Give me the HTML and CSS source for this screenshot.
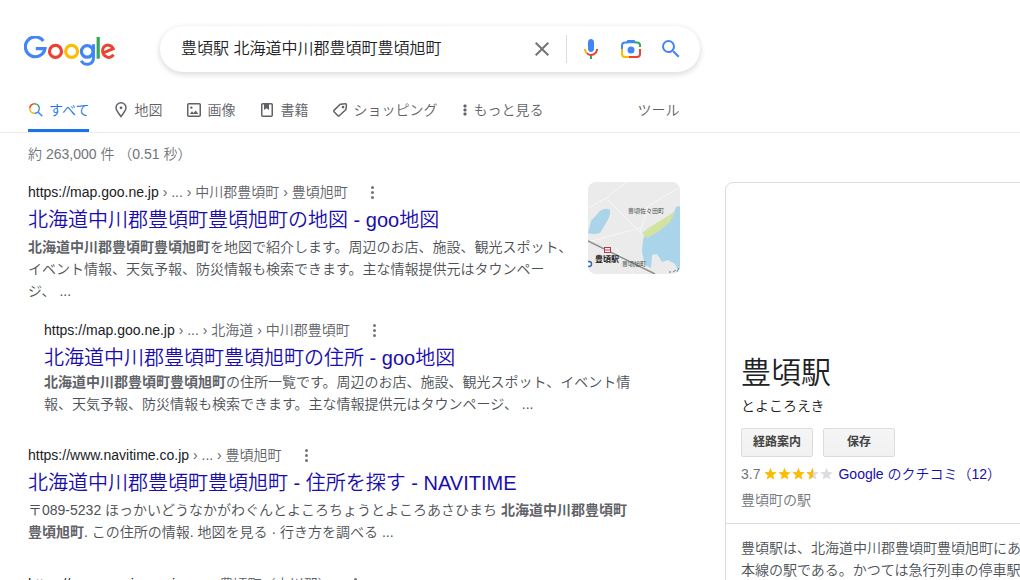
FILE: index.html
```html
<!DOCTYPE html>
<html lang="ja">
<head>
<meta charset="utf-8">
<title>豊頃駅 北海道中川郡豊頃町豊頃旭町 - Google 検索</title>
<link rel="stylesheet" href="styles.css">
</head>
<body>
<header class="header">
  <a class="logo" href="#" aria-label="Google">
    <svg width="92" height="32" viewBox="0 0 92 32" fill="none" stroke-width="3.200">
      <path d="M19.300 5A9.900 9.900 0 1 0 21 12.700H11.800" stroke="#4285f4"/>
      <circle cx="31.500" cy="15.400" r="6" stroke="#ea4335"/>
      <circle cx="47.600" cy="15.400" r="6" stroke="#fbbc05"/>
      <circle cx="63.200" cy="15.400" r="5.800" stroke="#4285f4"/>
      <path d="M69.500 8.300V21.500C69.500 29.500 59.500 30.300 57.300 24.800" stroke="#4285f4" stroke-width="3"/>
      <path d="M74.200 1V22.700" stroke="#34a853"/>
      <path d="M78.700 17.100L89.200 12.700C87.300 8.200 82 8.200 79.700 11.200C75.500 17.500 83.800 25.800 89.600 18.700" stroke="#ea4335" stroke-width="3"/>
    </svg>
  </a>
  <form class="search" role="search">
    <input class="search-input" type="text" aria-label="検索" value="豊頃駅 北海道中川郡豊頃町豊頃旭町">
    <button class="icon-btn clear" type="button" aria-label="クリア">
      <svg width="24" height="24" viewBox="0 0 24 24"><path fill="#70757a" d="M19 6.410L17.590 5 12 10.590 6.410 5 5 6.410 10.590 12 5 17.590 6.410 19 12 13.410 17.590 19 19 17.590 13.410 12z"/></svg>
    </button>
    <button class="icon-btn" type="button" aria-label="音声検索">
      <svg width="24" height="24" viewBox="0 0 24 24"><path fill="#4285f4" d="M12 15c1.660 0 3-1.310 3-2.970V5.010C15 3.340 13.660 2 12 2S9 3.340 9 5.010v7.020C9 13.690 10.340 15 12 15z"/><path fill="#34a853" d="M11 18.080h2V22h-2z"/><path fill="#fbbc05" d="M7.050 16.870C5.780 15.590 5 13.920 5 12h2c0 1.450.560 2.420 1.470 3.380z"/><path fill="#ea4335" d="M12 16.930a4.970 5.250 0 0 1-3.540-1.550l-1.410 1.490C8.310 18.140 10.060 19 12 19c3.870 0 6.990-2.920 6.990-7h-1.990c0 2.920-2.240 4.930-5 4.930z"/></svg>
    </button>
    <button class="icon-btn" type="button" aria-label="画像で検索">
      <svg width="24" height="24" viewBox="0 0 24 24" fill="none" stroke-width="2"><path stroke="#4285f4" d="M3 12V8.500A3 3 0 0 1 6 5.500H7.800L9.600 4H14.400L16.200 5.500"/><path fill="#4285f4" d="M8.500 3H15.500L17 6.300H7z"/><path stroke="#34a853" d="M16.200 5.500H18A3 3 0 0 1 21 8.500V10"/><path stroke="#ea4335" d="M21 12V17A3 3 0 0 1 18 20H10"/><path stroke="#fbbc05" d="M10 20H6A3 3 0 0 1 3 17V12"/><circle cx="12" cy="13" r="3.500" fill="#4285f4"/></svg>
    </button>
    <button class="icon-btn" type="submit" aria-label="Google 検索">
      <svg width="24" height="24" viewBox="0 0 24 24"><path fill="#4285f4" d="M15.500 14h-.79l-.28-.27A6.471 6.471 0 0 0 16 9.500 6.500 6.500 0 1 0 9.500 16c1.610 0 3.090-.59 4.230-1.570l.27.28v.790l5 4.990L20.490 19l-4.990-5zm-6 0C7.010 14 5 11.990 5 9.500S7.010 5 9.500 5 14 7.010 14 9.500 11.990 14 9.500 14z"/></svg>
    </button>
  </form>
</header>

<nav class="tabs">
  <a class="tab active" href="#">
    <svg width="16" height="16" viewBox="0 0 16 16" fill="none" stroke-width="1.500"><path stroke="#ea4335" d="M1.750 6.500A4.750 4.750 0 0 1 6.500 1.750"/><path stroke="#34a853" d="M6.500 1.750A4.750 4.750 0 0 1 11.250 6.500"/><path stroke="#4285f4" d="M11.250 6.500A4.750 4.750 0 0 1 6.500 11.250M10 10L14.300 14.300"/><path stroke="#fbbc05" d="M6.500 11.250A4.750 4.750 0 0 1 1.750 6.500"/></svg>すべて</a>
  <a class="tab" href="#">
    <svg width="16" height="16" viewBox="0 0 16 16"><path fill="none" stroke="#5f6368" stroke-width="1.500" d="M8 14.500C5.400 11 3 8.500 3 5.800A5 5 0 0 1 13 5.800C13 8.500 10.600 11 8 14.500z"/><circle cx="8" cy="5.800" r="1.400" fill="#5f6368"/></svg>地図</a>
  <a class="tab" href="#">
    <svg width="16" height="16" viewBox="0 0 16 16"><rect x="1.750" y="1.750" width="12.500" height="12.500" rx="1" fill="none" stroke="#5f6368" stroke-width="1.500"/><path fill="#5f6368" d="M3.800 12L6 9.300l1.600 1.600 2.200-2.400L12.300 12z"/><circle cx="5.300" cy="5.600" r="1.200" fill="#5f6368"/></svg>画像</a>
  <a class="tab" href="#">
    <svg width="16" height="16" viewBox="0 0 16 16"><rect x="2.750" y="1.750" width="10.500" height="12.500" rx="1" fill="none" stroke="#5f6368" stroke-width="1.500"/><path fill="#5f6368" d="M5 2h5v6L7.500 6.300 5 8z"/></svg>書籍</a>
  <a class="tab" href="#">
    <svg width="16" height="16" viewBox="0 0 16 16"><path fill="none" stroke="#5f6368" stroke-width="1.500" stroke-linejoin="round" d="M8.200 2.200L13.500 1.800Q14.500 1.800 14.400 3L14 7.500L7.200 13.800Q6.500 14.300 5.900 13.700L2 9.700Q1.400 9 2 8.400z"/><circle cx="11" cy="5.100" r="1.300" fill="#5f6368"/></svg>ショッピング</a>
  <a class="tab more" href="#">
    <svg width="8" height="16" viewBox="0 0 8 16" fill="#5f6368"><rect x="2.500" y="2.500" width="3" height="3" rx="1"/><rect x="2.500" y="6.500" width="3" height="3" rx="1"/><rect x="2.500" y="10.500" width="3" height="3" rx="1"/></svg>もっと見る</a>
  <button class="tab tools" type="button">ツール</button>
</nav>

<div class="page">
  <main class="results">
    <p class="stats">約 263,000 件 （0.51 秒）</p>

    <article class="result with-thumb">
      <div class="result-body">
        <div class="source"><cite class="url">https://map.goo.ne.jp<span class="crumb"> › ... › 中川郡豊頃町 › 豊頃旭町</span></cite><button class="kebab" type="button" aria-label="この結果について"><i class="dot"></i><i class="dot"></i><i class="dot"></i></button></div>
        <h3 class="title"><a href="#">北海道中川郡豊頃町豊頃旭町の地図 - goo地図</a></h3>
        <p class="snippet"><b>北海道中川郡豊頃町豊頃旭町</b>を地図で紹介します。周辺のお店、施設、観光スポット、イベント情報、天気予報、防災情報も検索できます。主な情報提供元はタウンペー<wbr><span class="tail">ジ、 ...</span></p>
      </div>
      <a class="thumb" href="#" aria-label="豊頃旭町の地図">
        <svg width="92" height="92" viewBox="0 0 92 92">
          <rect width="92" height="92" fill="#ebebeb"/>
          <g fill="none" stroke="#f6f6f6"><path d="M0 26L20 15L38 0M20 18L54 52M0 60L52 46M52 50L60 24L92 5M28 66L46 92"/></g>
          <path d="M0 51L3 39L12 29Q18 25 22 28Q23 33 18 41L12 51Q5 53 0 51z" fill="#a9d4ea"/>
          <path d="M55 58L58 49L86 30L88 25L92 24V92L87 82L80 78L74 80L69 72L64 73L63 86L57 83L54 70z" fill="#a9d4ea"/>
          <path d="M54 51L62 45L88 29L82 40L70 50L59 56z" fill="#d2e3a1"/>
          <path d="M0 59L67 92" fill="none" stroke="#8b8b8b" stroke-width="1.400"/>
          <rect x="16.500" y="65.500" width="6" height="5" fill="#fff" stroke="#bc364b"/><path d="M17 68H22" stroke="#bc364b"/>
          <circle cx="1" cy="82" r="2.500" fill="#fff" stroke="#3c68ad" stroke-width="1.500"/>
          <path d="M81 90H83M85 90L88 88M89 90L91 86" stroke="#65808a"/>
          <g class="map-small"><text x="40" y="31">豊頃佐々田町</text><text x="34" y="84">豊頃旭町</text></g>
          <text class="map-station" x="7" y="80">豊頃駅</text>
        </svg>
      </a>
    </article>

    <article class="result nested">
      <div class="source"><cite class="url">https://map.goo.ne.jp<span class="crumb"> › ... › 北海道 › 中川郡豊頃町</span></cite><button class="kebab" type="button" aria-label="この結果について"><i class="dot"></i><i class="dot"></i><i class="dot"></i></button></div>
      <h3 class="title"><a href="#">北海道中川郡豊頃町豊頃旭町の住所 - goo地図</a></h3>
      <p class="snippet"><b>北海道中川郡豊頃町豊頃旭町</b>の住所一覧です。周辺のお店、施設、観光スポット、イベント情報、天気予報、防災情報も検索できます。主な情報提供元はタウンページ、 ...</p>
    </article>

    <article class="result">
      <div class="source"><cite class="url">https://www.navitime.co.jp<span class="crumb"> › ... › 豊頃旭町</span></cite><button class="kebab" type="button" aria-label="この結果について"><i class="dot"></i><i class="dot"></i><i class="dot"></i></button></div>
      <h3 class="title"><a href="#">北海道中川郡豊頃町豊頃旭町 - 住所を探す - NAVITIME</a></h3>
      <p class="snippet">〒089-5232 ほっかいどうなかがわぐんとよころちょうとよころあさひまち <b>北海道中川郡豊頃町豊頃旭町</b>. この住所の情報. 地図を見る · 行き方を調べる ...</p>
    </article>

    <article class="result">
      <div class="source"><cite class="url">https://www.mapion.co.jp<span class="crumb"> › ... › 豊頃町（中川郡）</span></cite><button class="kebab" type="button" aria-label="この結果について"><i class="dot"></i><i class="dot"></i><i class="dot"></i></button></div>
    </article>
  </main>

  <aside class="panel">
    <div class="panel-head">
      <h2 class="panel-title">豊頃駅</h2>
      <p class="reading">とよころえき</p>
      <div class="actions">
        <button class="action" type="button">経路案内</button>
        <button class="action" type="button">保存</button>
      </div>
      <div class="rating">
        <span>3.7</span>
        <svg width="70" height="14" viewBox="0 0 70 14" role="img" aria-label="5 点中 3.7">
          <defs>
            <path id="star" d="M6.500 0.800L8.200 4.900L12.700 5.300L9.300 8.200L10.300 12.600L6.500 10.300L2.700 12.600L3.700 8.200L0.300 5.300L4.800 4.900z"/>
            <clipPath id="filled"><rect width="49" height="14"/></clipPath>
          </defs>
          <g fill="#dadce0"><use href="#star" x="42"/><use href="#star" x="56"/></g>
          <g fill="#fbbc04" clip-path="url(#filled)"><use href="#star"/><use href="#star" x="14"/><use href="#star" x="28"/><use href="#star" x="42"/></g>
        </svg>
        <a href="#">Google のクチコミ（12）</a>
      </div>
      <p class="category">豊頃町の駅</p>
    </div>
    <p class="description">豊頃駅は、北海道中川郡豊頃町豊頃旭町にあ<br>本線の駅である。かつては急行列車の停車駅</p>
  </aside>
</div>
</body>
</html>
```

FILE: styles.css
```css
* {
  box-sizing: border-box;
}

html {
  overflow: hidden;
}

body {
  margin: 0;
  background: #fff;
  color: #202124;
  font-family: "Liberation Sans", "Noto Sans CJK JP", sans-serif;
  font-size: 14px;
  font-weight: 350;
  line-height: 22px;
}

h2,
h3,
p {
  margin: 0;
  font-weight: 350;
}

a {
  color: #1a0dab;
  text-decoration: none;
}

button {
  font: inherit;
  border: 0;
  background: none;
  padding: 0;
}

svg {
  display: block;
  flex: none;
}

.header {
  display: flex;
  align-items: center;
  padding: 26px 24px 0;
}

.logo {
  width: 136px;
  padding-top: 5px;
}

.search {
  display: flex;
  align-items: center;
  width: 540px;
  height: 46px;
  padding: 0 9px 0 21px;
  border-radius: 24px;
  background: #fff;
  box-shadow: 0 2px 5px 1px rgba(64, 60, 67, 0.16);
}

.search-input {
  flex: 1;
  min-width: 0;
  height: 34px;
  padding: 0 0 4px;
  border: 0;
  outline: 0;
  background: none;
  color: #202124;
  font: inherit;
  font-size: 16px;
}

.icon-btn {
  display: flex;
  justify-content: center;
  width: 40px;
  padding: 2px 0;
}

.clear {
  width: 49px;
  border-right: 1px solid #dadce0;
  margin-right: 4px;
}

.tabs {
  display: flex;
  gap: 24px;
  height: 61px;
  padding: 16px 28px 0;
  border-bottom: 1px solid #ebebeb;
}

.tab {
  display: flex;
  align-items: center;
  gap: 5px;
  height: 44px;
  color: #5f6368;
  white-space: nowrap;
}

.tab.active {
  padding-top: 3px;
  color: #1a73e8;
  border-bottom: 3px solid #1a73e8;
}

.tab.more {
  gap: 4px;
}

.tab.tools {
  margin-left: 70px;
}

.page {
  display: flex;
  align-items: flex-start;
  gap: 45px;
  padding-left: 28px;
}

.results {
  flex: none;
  width: 652px;
}

.stats {
  padding: 10px 0 16px;
  color: #70757a;
}

.result {
  width: 600px;
  margin-bottom: 30px;
}

.result.with-thumb {
  display: flex;
  justify-content: space-between;
  width: auto;
  margin-bottom: 17px;
}

.result-body {
  width: 548px;
}

.result.nested {
  margin-bottom: 29px;
  margin-left: 16px;
}

.source {
  display: flex;
  align-items: center;
  gap: 22px;
}

.url {
  color: #202124;
  font-style: normal;
  white-space: nowrap;
}

.crumb {
  color: #5f6368;
}

.kebab {
  display: flex;
  flex-direction: column;
  gap: 2px;
  padding: 0 1px;
}

.dot {
  width: 3px;
  height: 3px;
  border-radius: 50%;
  background: #70757a;
}

.title {
  font-size: 20px;
  line-height: 26px;
  padding: 4px 0 3px;
  white-space: nowrap;
}

.nested .title {
  padding-bottom: 0;
}

.snippet {
  color: #4d5156;
}

.snippet b {
  color: #5f6368;
  font-weight: 700;
}

.tail {
  white-space: nowrap;
}

.thumb {
  height: 92px;
  margin-top: 1px;
  border-radius: 8px;
  overflow: hidden;
}

.map-small {
  font-size: 6px;
  font-weight: 400;
  fill: #48524c;
}

.map-station {
  font-size: 8px;
  font-weight: 700;
  fill: #222;
}

.panel {
  flex: none;
  width: 369px;
  margin-top: 49px;
  border: 1px solid #dadce0;
  border-radius: 8px;
}

.panel-head {
  padding: 170px 15px 12px;
  border-bottom: 1px solid #dadce0;
}

.panel-title {
  font-size: 30px;
  line-height: 40px;
}

.reading {
  padding: 2px 0 11px;
}

.actions {
  display: flex;
  gap: 10px;
}

.action {
  width: 72px;
  height: 29px;
  border: 1px solid #dadce0;
  border-radius: 2px;
  background: linear-gradient(#f5f5f5, #f1f1f1);
  color: #444;
  font-size: 12px;
  font-weight: 700;
  line-height: 25px;
}

.rating {
  display: flex;
  align-items: center;
  gap: 4px;
  padding: 6px 0 4px;
  color: #70757a;
  white-space: nowrap;
}

.category {
  color: #70757a;
}

.description {
  padding: 13px 15px;
  color: #4d5156;
  white-space: nowrap;
}
```
